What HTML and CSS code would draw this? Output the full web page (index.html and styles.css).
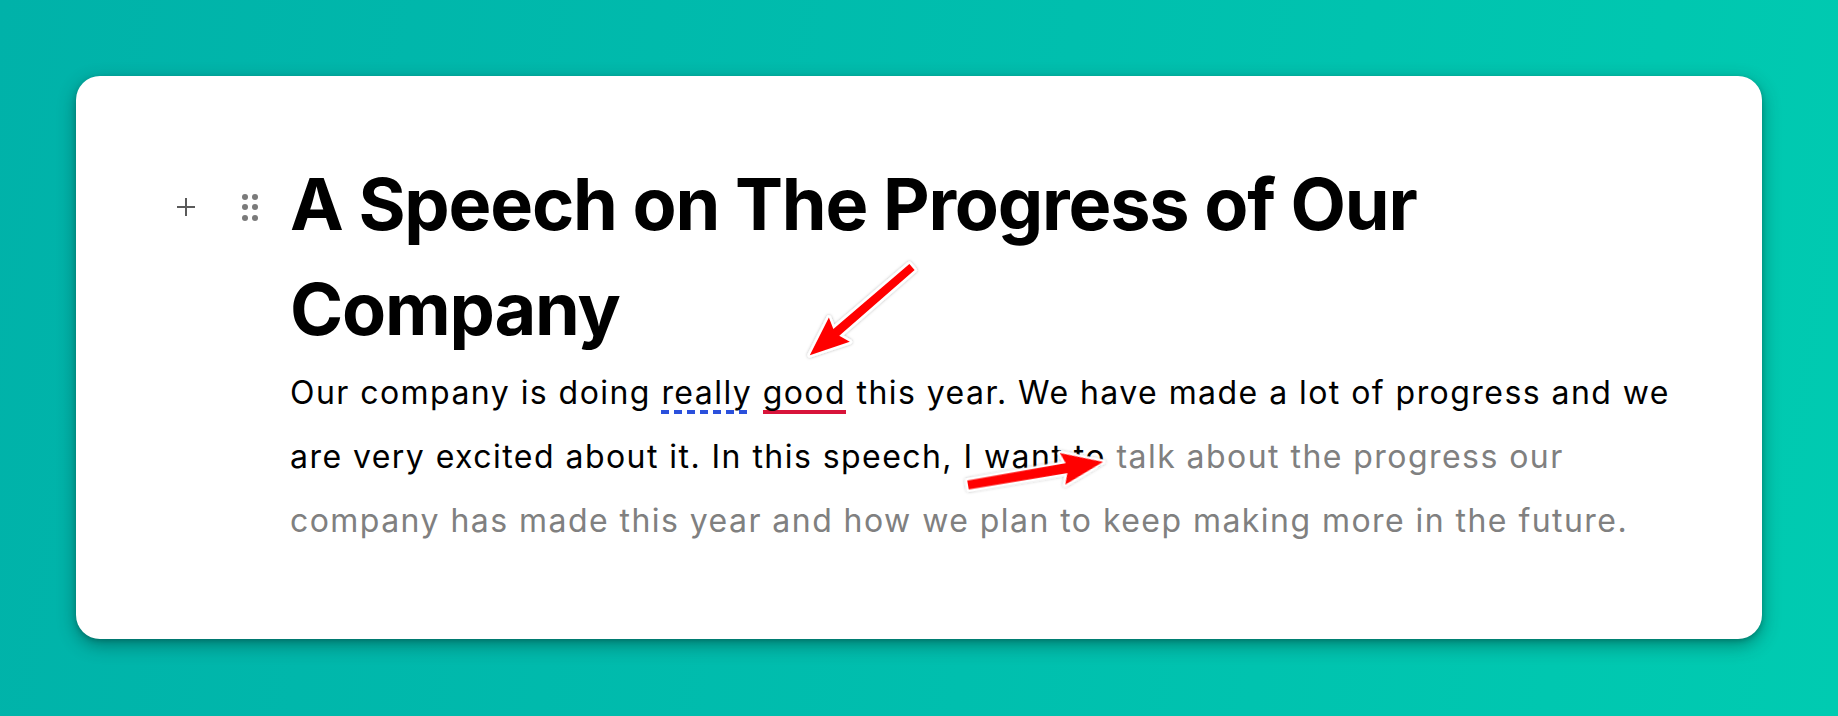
FILE: index.html
```html
<!DOCTYPE html>
<html lang="en">
<head>
<meta charset="utf-8">
<title>A Speech on The Progress of Our Company</title>
<link rel="stylesheet" href="styles.css">
</head>
<body>
<main class="page">
  <section class="card">
    <div class="block">
      <div class="gutter">
        <span class="plus" aria-label="Add block">
          <svg width="20" height="20" viewBox="0 0 20 20"><path d="M10 1v18M1 10h18" stroke="#5a5a5a" stroke-width="2" fill="none"/></svg>
        </span>
        <span class="handle" aria-label="Drag">
          <svg width="16" height="28" viewBox="0 0 16 28"><g fill="#7a7a7a"><circle cx="3" cy="4" r="3"/><circle cx="13" cy="4" r="3"/><circle cx="3" cy="14" r="3"/><circle cx="13" cy="14" r="3"/><circle cx="3" cy="25" r="3"/><circle cx="13" cy="25" r="3"/></g></svg>
        </span>
      </div>
      <div class="content">
        <h1 class="title">A Speech on The Progress of Our Company</h1>
        <p class="body">Our company is doing <span class="mark-style">really</span> <span class="mark-error">good</span> this year. We have made a lot of progress and we are very excited about it. In this speech, I want to <span class="suggest">talk about the progress our company has made this year and how we plan to keep making more in the future.</span></p>
      </div>
    </div>
    <svg class="arrows" width="1686" height="563" viewBox="0 0 1686 563">
      <defs>
        <filter id="sh" x="-20%" y="-20%" width="140%" height="140%">
          <feDropShadow dx="0" dy="0" stdDeviation="1.5" flood-color="#000" flood-opacity="0.3"/>
        </filter>
      </defs>
      <g filter="url(#sh)">
        <polygon transform="translate(836 191) rotate(139.2)" points="0,-4 100,-4.5 96,-16 135,0 96,16 100,4.5 0,4" fill="#ff0000" stroke="#fff" stroke-width="5" stroke-linejoin="round" paint-order="stroke"/>
        <polygon transform="translate(892 409) rotate(-9.7)" points="0,-4.5 100,-5 96,-16 137,0 96,16 100,5 0,4.5" fill="#ff0000" stroke="#fff" stroke-width="5" stroke-linejoin="round" paint-order="stroke"/>
      </g>
    </svg>
  </section>
</main>
</body>
</html>
```

FILE: styles.css
```css
html, body {
  margin: 0;
  padding: 0;
}
body {
  width: 1838px;
  height: 716px;
  overflow: hidden;
  background: linear-gradient(100deg, #00b2a9 0%, #00bfae 55%, #00cbb1 100%);
  font-family: Inter, "Noto Sans", "Liberation Sans", sans-serif;
}
.page {
  padding: 76px 76px 0 76px;
}
.card {
  position: relative;
  width: 1686px;
  height: 563px;
  box-sizing: border-box;
  background: #fff;
  border-radius: 24px;
  box-shadow: 0 6px 18px rgba(0, 50, 45, 0.45), 0 2px 4px rgba(0, 50, 45, 0.25);
  padding: 75px 72px 0 96px;
}
.block {
  display: flex;
}
.gutter {
  display: flex;
  align-items: center;
  height: 105px;
  padding-top: 6px;
  box-sizing: border-box;
  width: 118px;
  flex: none;
}
.plus {
  display: flex;
  align-items: center;
  justify-content: center;
  width: 28px;
  height: 28px;
}
.handle {
  display: flex;
  align-items: center;
  justify-content: center;
  width: 24px;
  height: 28px;
  margin-left: 38px;
}
.content {
  flex: 1;
  min-width: 0;
}
.title {
  margin: 0;
  font-size: 72px;
  line-height: 105px;
  font-weight: 700;
  color: #000;
  letter-spacing: -1.2px;
}
.body {
  margin: 0;
  font-size: 32px;
  line-height: 64px;
  color: #000;
  letter-spacing: 1.45px;
}
.mark-style {
  padding-bottom: 2px;
  background: repeating-linear-gradient(to right, #2a50dc 0 8px, transparent 8px 13px) left bottom / 100% 4px no-repeat;
}
.mark-error {
  padding-bottom: 2px;
  background: linear-gradient(#d8143a, #d8143a) left bottom / 100% 4px no-repeat;
}
.suggest {
  color: #808080;
}
.arrows {
  position: absolute;
  left: 0;
  top: 0;
  pointer-events: none;
}
```
